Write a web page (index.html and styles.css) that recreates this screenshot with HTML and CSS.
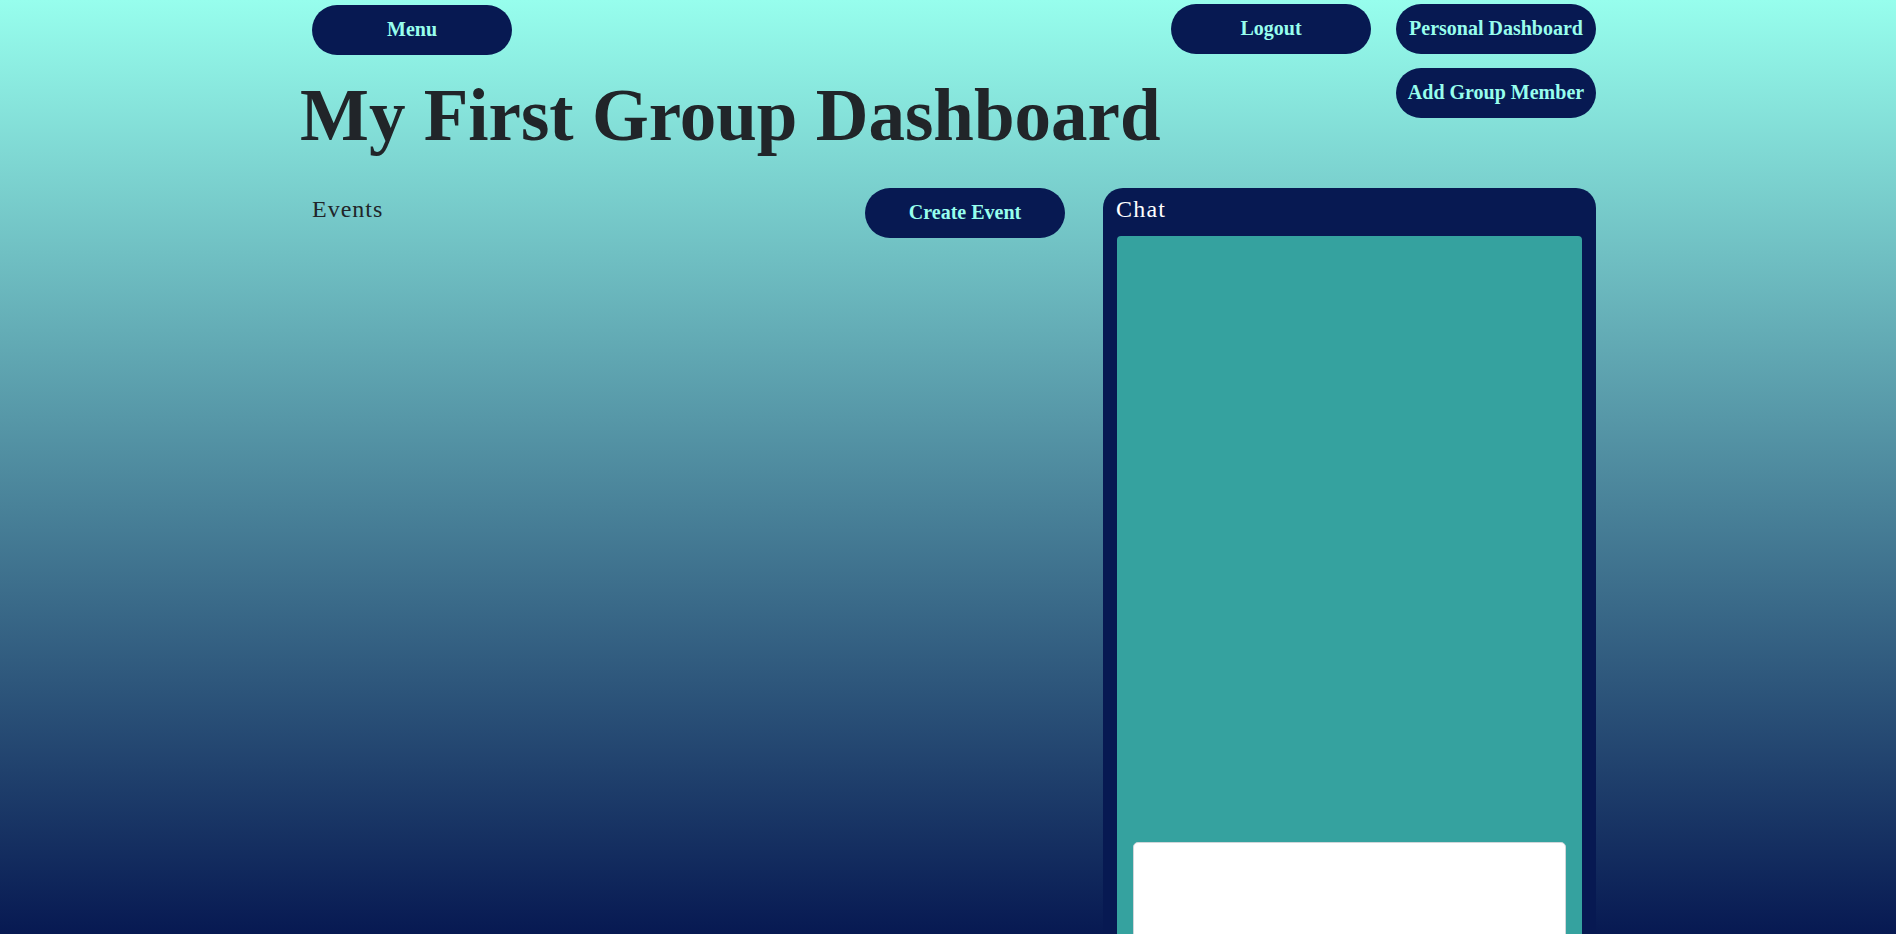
FILE: index.html
```html
<!DOCTYPE html>
<html lang="en">
<head>
<meta charset="utf-8">
<title>My First Group Dashboard</title>
<link rel="stylesheet" href="styles.css">
</head>
<body>
<div class="page">
  <header class="header">
    <div class="header-left">
      <button class="pill pill-menu">Menu</button>
      <h1 class="title">My First Group Dashboard</h1>
    </div>
    <div class="header-right">
      <button class="pill">Logout</button>
      <div class="stack">
        <button class="pill">Personal Dashboard</button>
        <button class="pill">Add Group Member</button>
      </div>
    </div>
  </header>
  <main class="main">
    <section class="events">
      <h2 class="events-title">Events</h2>
      <button class="pill">Create Event</button>
    </section>
    <aside class="chat">
      <h2 class="chat-title">Chat</h2>
      <div class="chat-body">
        <div class="messages"></div>
        <div class="composer"></div>
      </div>
    </aside>
  </main>
</div>
</body>
</html>
```
FILE: styles.css
```css
html, body {
  margin: 0;
  padding: 0;
}
body {
  min-height: 100vh;
  background: linear-gradient(#97FEED, #071952) fixed;
  font-family: "Liberation Serif", "Times New Roman", serif;
  color: #212529;
  overflow: hidden;
}
.page {
  width: 1296px;
  margin: 0 auto;
}
.header {
  display: flex;
  justify-content: space-between;
  align-items: flex-start;
}
.header-left {
  display: flex;
  flex-direction: column;
  align-items: flex-start;
}
.pill {
  width: 200px;
  height: 50px;
  border: none;
  border-radius: 25px;
  background: #071952;
  color: #97FEED;
  font-family: "Liberation Serif", "Times New Roman", serif;
  font-weight: bold;
  font-size: 20px;
  line-height: 48px;
  padding: 0 0 2px 0;
  cursor: pointer;
}
.pill-menu {
  margin-top: 5px;
  margin-left: 12px;
}
.title {
  margin: 18px 0 0 0;
  font-size: 73px;
  line-height: 86px;
  font-weight: bold;
  color: #212529;
}
.header-right {
  display: flex;
  gap: 25px;
  margin-top: 4px;
}
.stack {
  display: flex;
  flex-direction: column;
  gap: 14px;
}
.main {
  display: flex;
  gap: 38px;
  margin-top: 29px;
  align-items: flex-start;
}
.events {
  width: 765px;
  display: flex;
  justify-content: space-between;
  align-items: flex-start;
}
.events-title {
  margin: 8px 0 0 12px;
  font-size: 24px;
  font-weight: normal;
  line-height: 27px;
  letter-spacing: 1px;
  color: #212529;
}
.chat {
  flex: 1;
  background: #071952;
  border-radius: 20px;
  padding: 8px 14px 14px;
}
.chat-title {
  margin: 0 0 13px -1px;
  font-size: 24px;
  line-height: 27px;
  font-weight: normal;
  letter-spacing: 1.2px;
  color: #ffffff;
}
.chat-body {
  background: #35A29F;
  border-radius: 4px;
  padding: 16px;
}
.messages {
  height: 590px;
}
.composer {
  height: 160px;
  background: #ffffff;
  border-radius: 5px;
  border: 1px solid #d0d6da;
}
```
